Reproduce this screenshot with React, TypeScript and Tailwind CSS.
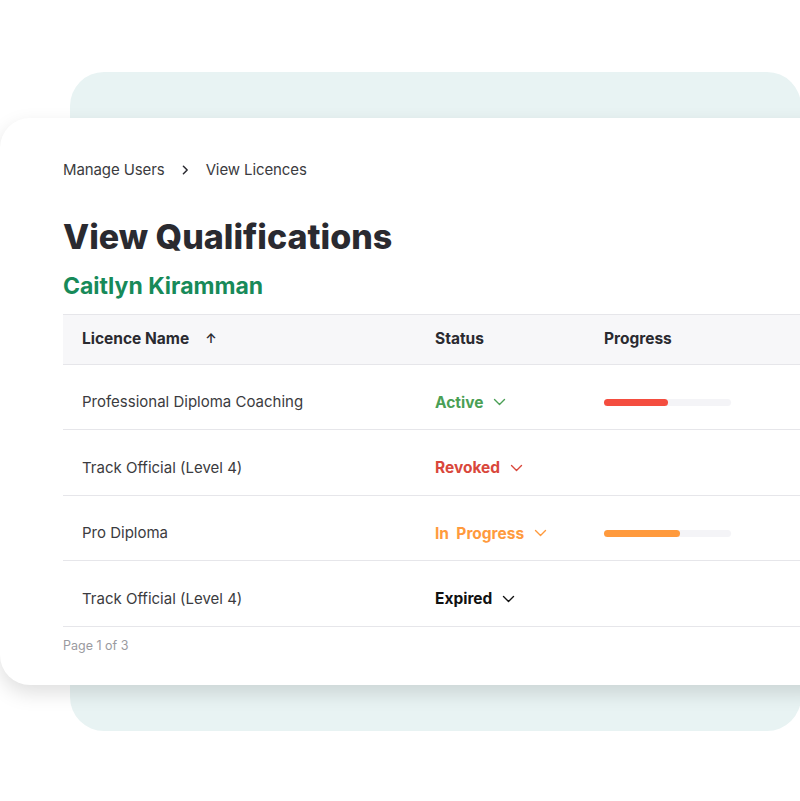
import React from 'react';

type Row = {
    name: string;
    status: string;
    statusColor: string;
    progress: number | null;
    barColor?: string;
};

const rows: Row[] = [
    { name: 'Professional Diploma Coaching', status: 'Active', statusColor: 'text-[#4a9f55]', progress: 50, barColor: 'bg-[#f44d3f]' },
    { name: 'Track Official (Level 4)', status: 'Revoked', statusColor: 'text-[#d9473b]', progress: null },
    { name: 'Pro Diploma', status: 'In\u00a0 Progress', statusColor: 'text-[#ff9a3d]', progress: 60, barColor: 'bg-[#ff9a3d]' },
    { name: 'Track Official (Level 4)', status: 'Expired', statusColor: 'text-[#111111]', progress: null },
];

const Chevron: React.FC<{ className?: string }> = ({ className }) => (
    <svg viewBox="0 0 12 8" className={className} fill="none" stroke="currentColor" strokeWidth="1.4" strokeLinecap="round" strokeLinejoin="round">
        <path d="M1 1.5l5 5 5-5" />
    </svg>
);

const ProgressBar: React.FC<{ value: number; color: string }> = ({ value, color }) => (
    <div className="h-[7px] w-[127px] rounded-full bg-[#f4f4f7]">
        <div className={`h-full rounded-full ${color}`} style={{ width: `${value}%` }} />
    </div>
);

export default function App() {
    return (
        <div className="relative h-[801px] w-[800px] overflow-hidden bg-white" style={{ fontFamily: 'Inter, "Noto Sans", sans-serif' }}>
            {/* teal backdrop behind the card */}
            <div className="absolute left-[70px] top-[72px] h-[659px] w-[731px] rounded-[34px] bg-[#e8f3f3]" />

            <div className="relative ml-0 mt-[118px] h-[567px] w-[840px] rounded-[30px] bg-white pl-[63px] pt-[41px] shadow-[0_8px_20px_rgba(0,0,0,0.13)]">
                <nav className="flex items-center text-[15px] text-[#3b3b40] tracking-[-0.1px]">
                    <span>Manage Users</span>
                    <svg viewBox="0 0 8 12" className="mx-[17px] h-[10px] w-[7px]" fill="none" stroke="#2a2a30" strokeWidth="1.8" strokeLinecap="round" strokeLinejoin="round">
                        <path d="M1.5 1.5l4.5 4.5-4.5 4.5" />
                    </svg>
                    <span>View Licences</span>
                </nav>

                <h1 className="mt-[34px] text-[34px] font-extrabold leading-[42px] text-[#2a2a30]">View Qualifications</h1>
                <h2 className="mt-[15px] text-[23px] font-bold leading-[26px] text-[#178a59]">Caitlyn Kiramman</h2>

                <div className="mt-[15px]">
                    <div className="grid h-[51px] grid-cols-[372px_169px_1fr] items-center border-y border-[#e6e6ea] bg-[#f7f7f9] text-[15.5px] font-bold text-[#2a2a30]">
                        <div className="flex items-center pl-[19px]">
                            <span>Licence Name</span>
                            <span className="ml-[16px] text-[13px] font-semibold">↑</span>
                        </div>
                        <div>Status</div>
                        <div>Progress</div>
                    </div>

                    {rows.map((row, i) => (
                        <div key={i} className="grid h-[65.5px] grid-cols-[372px_169px_1fr] items-center border-b border-[#e6e6ea] pt-[11px] text-[15px]">
                            <div className="pl-[19px] text-[#3b3b40]">{row.name}</div>
                            <div className={`flex items-center text-[15.5px] font-bold ${row.statusColor}`}>
                                <span>{row.status}</span>
                                <Chevron className="ml-[10px] h-[8px] w-[13px]" />
                            </div>
                            <div>
                                {row.progress !== null && row.barColor && <ProgressBar value={row.progress} color={row.barColor} />}
                            </div>
                        </div>
                    ))}
                </div>

                <div className="mt-[10px] text-[12.5px] text-[#9a9aa0]">Page 1 of 3</div>
            </div>
        </div>
    );
}
